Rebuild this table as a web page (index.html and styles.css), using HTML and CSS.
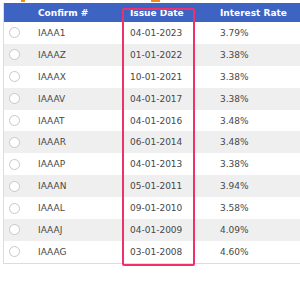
FILE: index.html
```html
<!DOCTYPE html>
<html>
<head>
<meta charset="utf-8">
<link rel="stylesheet" href="styles.css">
</head>
<body>
<div class="top"><span class="mark m1"></span><span class="mark m2"></span></div>
<div class="table">
  <div class="row head">
    <div class="cell"></div>
    <div class="cell">Confirm #</div>
    <div class="cell">Issue Date</div>
    <div class="cell">Interest Rate</div>
  </div>
  <div class="row"><div class="cell"><span class="radio"></span></div><div class="cell">IAAA1</div><div class="cell">04-01-2023</div><div class="cell">3.79%</div></div>
  <div class="row alt"><div class="cell"><span class="radio"></span></div><div class="cell">IAAAZ</div><div class="cell">01-01-2022</div><div class="cell">3.38%</div></div>
  <div class="row"><div class="cell"><span class="radio"></span></div><div class="cell">IAAAX</div><div class="cell">10-01-2021</div><div class="cell">3.38%</div></div>
  <div class="row alt"><div class="cell"><span class="radio"></span></div><div class="cell">IAAAV</div><div class="cell">04-01-2017</div><div class="cell">3.38%</div></div>
  <div class="row"><div class="cell"><span class="radio"></span></div><div class="cell">IAAAT</div><div class="cell">04-01-2016</div><div class="cell">3.48%</div></div>
  <div class="row alt"><div class="cell"><span class="radio"></span></div><div class="cell">IAAAR</div><div class="cell">06-01-2014</div><div class="cell">3.48%</div></div>
  <div class="row"><div class="cell"><span class="radio"></span></div><div class="cell">IAAAP</div><div class="cell">04-01-2013</div><div class="cell">3.38%</div></div>
  <div class="row alt"><div class="cell"><span class="radio"></span></div><div class="cell">IAAAN</div><div class="cell">05-01-2011</div><div class="cell">3.94%</div></div>
  <div class="row"><div class="cell"><span class="radio"></span></div><div class="cell">IAAAL</div><div class="cell">09-01-2010</div><div class="cell">3.58%</div></div>
  <div class="row alt"><div class="cell"><span class="radio"></span></div><div class="cell">IAAAJ</div><div class="cell">04-01-2009</div><div class="cell">4.09%</div></div>
  <div class="row"><div class="cell"><span class="radio"></span></div><div class="cell">IAAAG</div><div class="cell">03-01-2008</div><div class="cell">4.60%</div></div>
  <div class="highlight"></div>
</div>
</body>
</html>
```
FILE: styles.css
```css
html, body {
  margin: 0;
  padding: 0;
  background: #ffffff;
  overflow: hidden;
}
body {
  width: 300px;
  height: 283px;
  font-family: "DejaVu Sans", Verdana, sans-serif;
  font-size: 9px;
  color: #474747;
}
.top {
  height: 3px;
  position: relative;
}
.mark {
  position: absolute;
  top: 0;
  height: 2px;
  background: #f28a1e;
}
.m1 { left: 21px; width: 4px; }
.m2 { left: 151px; width: 9px; }
.table {
  position: relative;
  margin-left: 3px;
  width: 310px;
  border-left: 1px solid #dcdcdc;
  border-bottom: 1px solid #dcdcdc;
}
.row {
  display: grid;
  grid-template-columns: 26px 92px 90px 1fr;
  height: 21.9px;
  align-items: center;
  background: #ffffff;
}
.row.alt {
  background: #efefef;
}
.row.head {
  height: 19px;
  background: #3d63c3;
  color: #ffffff;
  font-weight: bold;
}
.cell {
  padding-left: 8px;
  white-space: nowrap;
}
.cell:first-child {
  padding-left: 5px;
  display: flex;
  align-items: center;
}
.radio {
  display: block;
  width: 9px;
  height: 9px;
  border: 1px solid #c8c8c8;
  border-radius: 50%;
  background: #ffffff;
}
.highlight {
  position: absolute;
  left: 118px;
  top: 5px;
  width: 69px;
  height: 254px;
  border: 2px solid #f0306a;
  border-radius: 2px;
}
```
